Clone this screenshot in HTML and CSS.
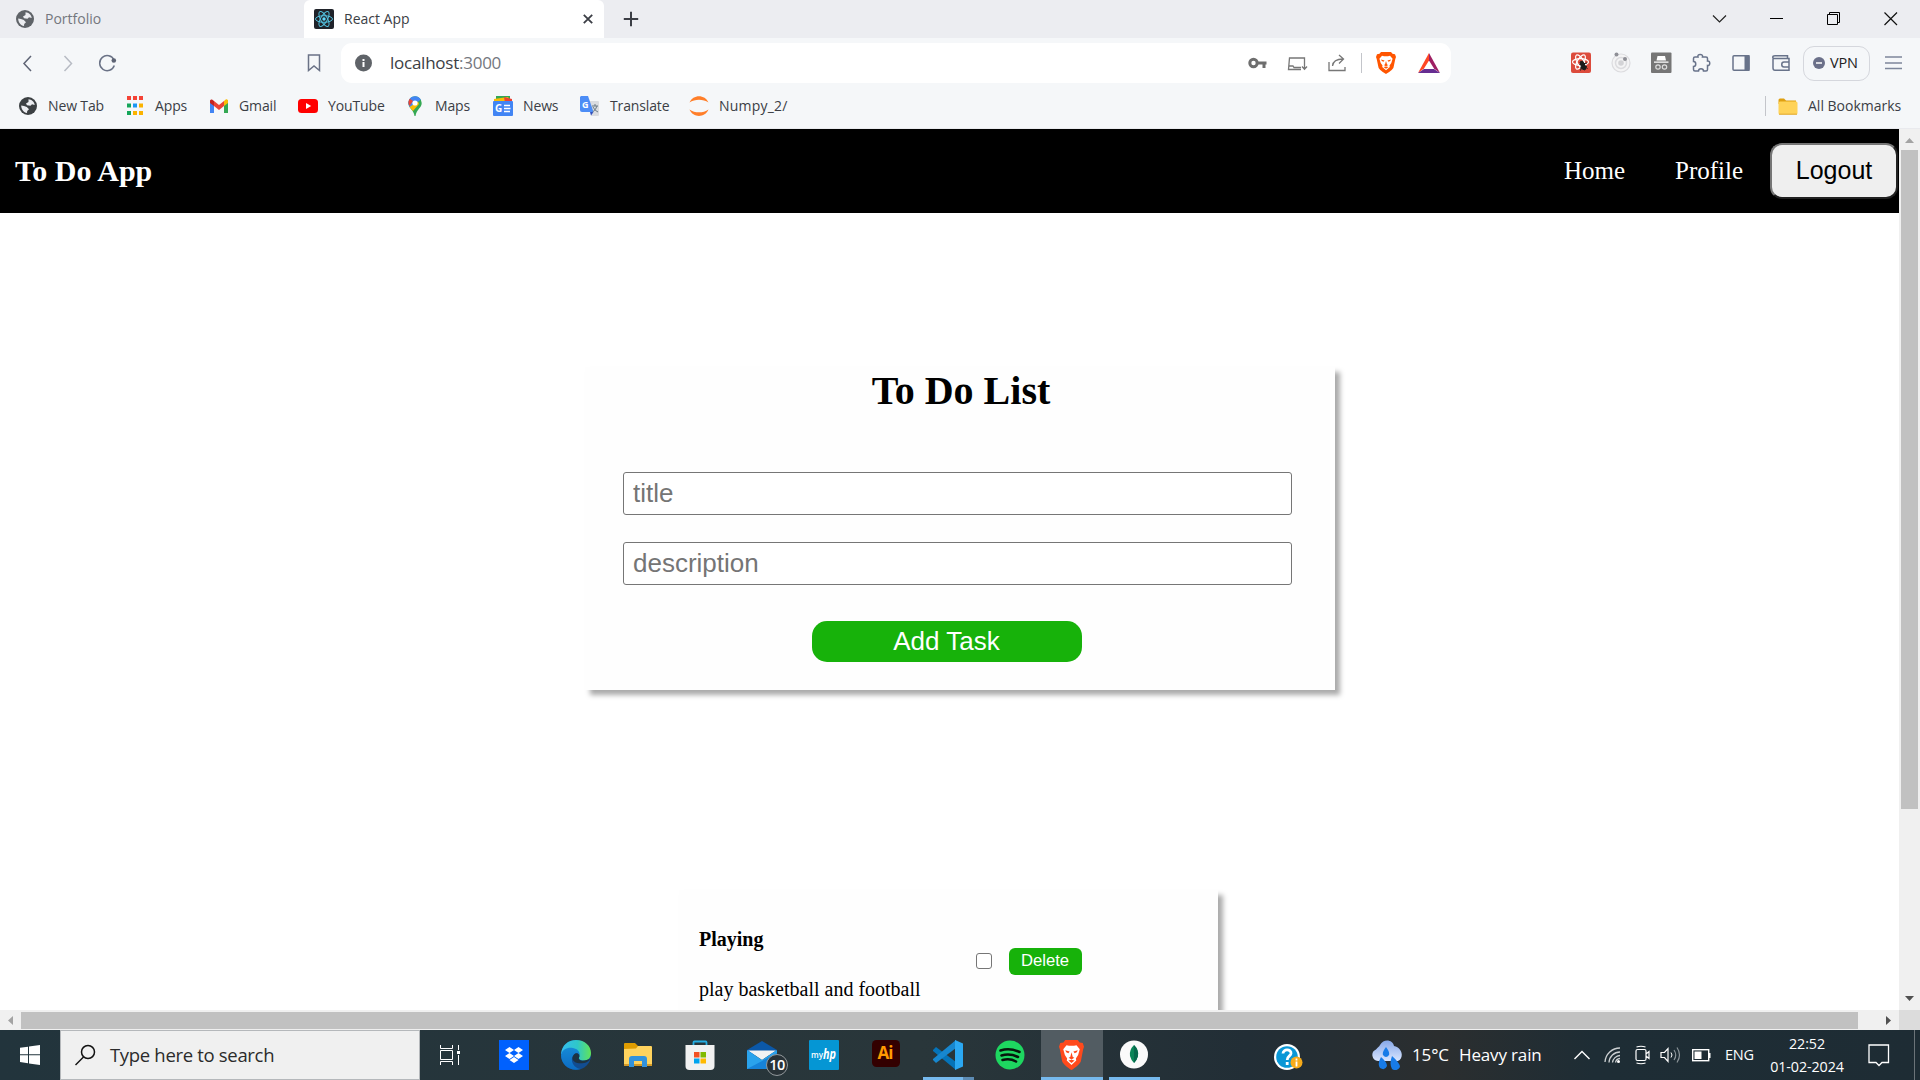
FILE: index.html
```html
<!DOCTYPE html>
<html lang="en">
<head>
<meta charset="utf-8">
<title>React App</title>
<link rel="stylesheet" href="styles.css">
</head>
<body>
<svg class="defs" width="0" height="0">
  <symbol id="globe" viewBox="0 0 18 18"><circle cx="9" cy="9" r="9" fill="currentColor"/><path d="M9.5 2.2C12.500 2.300 15.400 4.700 15.700 8L13 7.300L11.500 8.800L8 8.300L7 6.500L9.500 5ZM2.200 8.500L5 9L7.800 10L10 12.200L8.200 14L8 15.900C4.800 15.500 2.200 12.500 2.200 8.500Z" fill="#ecedf1"/></symbol>
  <symbol id="lion" viewBox="0 0 20 22"><path d="M5 0H15L16.500 1.800L19 2.200L20 5L19.300 7L17.500 15.500C17 17.300 13 20.300 10 22C7 20.300 3 17.300 2.500 15.500L.7 7L0 5L1 2.200L3.500 1.800Z" fill="currentColor"/><path d="M6 3.800L8 4.200H12L14 3.800L16.600 6.800L15.300 11L13.500 13.500L13.800 15L10 18.300L6.200 15L6.500 13.500L4.700 11L3.400 6.800Z" fill="#fff"/><path d="M5 7.500L8.500 8.500L7.500 9.800L5.800 9ZM15 7.500L11.500 8.500L12.500 9.800L14.200 9ZM10 9L11 12.500L12.300 13L10 14.300L7.700 13L9 12.500ZM7.500 15L10 14.500L12.500 15L10 16.800Z" fill="currentColor"/></symbol>
</svg>

<header class="browser">
  <div class="tabs">
    <div class="tab"><svg class="globe faded" width="18" height="18"><use href="#globe"/></svg><span class="muted">Portfolio</span></div>
    <div class="tab active">
      <svg width="20" height="20" viewBox="0 0 20 20"><rect width="20" height="20" rx="2" fill="#20232a"/><g fill="none" stroke="#53c1de" stroke-width="1"><ellipse cx="10" cy="10" rx="8.500" ry="3.300"/><ellipse cx="10" cy="10" rx="8.500" ry="3.300" transform="rotate(60 10 10)"/><ellipse cx="10" cy="10" rx="8.500" ry="3.300" transform="rotate(120 10 10)"/></g><circle cx="10" cy="10" r="1.700" fill="#61dafb"/></svg>
      <span>React App</span>
      <svg class="tab-close" width="10" height="10" viewBox="0 0 10 10"><path d="M.8.8L9.200 9.200M9.200.8L.8 9.200" stroke="#3b3e45" stroke-width="1.800"/></svg>
    </div>
    <svg class="new-tab" width="16" height="16" viewBox="0 0 16 16"><path d="M8 .8V15.200M.8 8H15.200" stroke="#3b3e45" stroke-width="2"/></svg>
    <div class="window-buttons">
      <svg width="57" height="38" viewBox="0 0 57 38"><path d="M22 15.500L28.500 22L35 15.500" fill="none" stroke="#222" stroke-width="1.200"/></svg>
      <svg width="57" height="38" viewBox="0 0 57 38"><path d="M22 18.500H35" stroke="#000"/></svg>
      <svg width="57" height="38" viewBox="0 0 57 38"><path d="M22.500 14.500H32.500V24.500H22.500ZM24.500 14V12.500H34.500V22.500H33" fill="none" stroke="#000"/></svg>
      <svg width="57" height="38" viewBox="0 0 57 38"><path d="M22.500 12.500L35 25M35 12.500L22.500 25" stroke="#111" stroke-width="1.200"/></svg>
    </div>
  </div>

  <div class="toolbar">
    <div class="nav-icons">
      <svg width="40" height="40" viewBox="0 0 40 40"><path d="M23 13L16 20.500L23 28" fill="none" stroke="#5e6475" stroke-width="1.500"/></svg>
      <svg width="40" height="40" viewBox="0 0 40 40"><path d="M16.500 13L23.500 20.500L16.500 28" fill="none" stroke="#b7bbc4" stroke-width="1.500"/></svg>
      <svg width="40" height="40" viewBox="0 0 40 40"><path d="M26 17A7.500 7.500 0 1 0 26.300 22.500" fill="none" stroke="#6a7286" stroke-width="1.500"/><circle cx="25.800" cy="17.500" r="2.300" fill="#5e6475"/></svg>
    </div>
    <svg class="mark" width="14" height="18" viewBox="0 0 14 18"><path d="M1.500 1H12.500V16.500L7 12L1.500 16.500Z" fill="none" stroke="#6a7286" stroke-width="1.500"/></svg>
    <div class="address">
      <svg width="18" height="18" viewBox="0 0 18 18"><circle cx="8.500" cy="9" r="8.500" fill="#5f6368"/><path d="M8.500 8V13M8.500 5V7" stroke="#fff" stroke-width="2"/></svg>
      <span class="url">localhost<span class="port">:3000</span></span>
      <div class="address-icons">
        <svg width="40" height="40" viewBox="0 0 40 40"><circle cx="17.500" cy="20" r="3.700" fill="none" stroke="#6e6e6e" stroke-width="3"/><path d="M21.500 20H30.500M28 20V25" stroke="#6e6e6e" stroke-width="3"/></svg>
        <svg width="40" height="40" viewBox="0 0 40 40"><path d="M25 26.500H12.500L13.500 15H28.500V21M13 23H17L18 24.500H25M28.500 21V26M26 23.500L28.500 26.200L31 23.500" fill="none" stroke="#777" stroke-width="1.300"/></svg>
        <svg width="40" height="40" viewBox="0 0 40 40"><path d="M13 19V27.500H29V24M16.500 23C17 18 20 16 27 16M23 12L27.500 16L23 20.500" fill="none" stroke="#777" stroke-width="1.300"/></svg>
      </div>
      <i class="divider"></i>
      <svg class="shield" width="20" height="22"><use href="#lion"/></svg>
      <svg class="bat" width="22" height="20" viewBox="0 0 22 20"><path d="M11 0L0 20L6 15.500L11 7.500Z" fill="#ff4724"/><path d="M11 0L22 20L16 15.500L11 7.500Z" fill="#9e1f63"/><path d="M0 20H22L16 16H6Z" fill="#662d91"/></svg>
    </div>
    <div class="extensions">
      <svg width="40" height="40" viewBox="0 0 40 40"><rect x="10" y="9.500" width="20" height="20.500" rx="2" fill="#dc4b3c"/><g fill="none" stroke="#fff" stroke-width="1.200"><ellipse cx="19.500" cy="19" rx="8" ry="3.300"/><ellipse cx="19.500" cy="19" rx="8" ry="3.300" transform="rotate(60 19.500 19)"/><ellipse cx="19.500" cy="19" rx="8" ry="3.300" transform="rotate(120 19.500 19)"/></g><path d="M19 19L21.500 18L25 24L24 27L21 26ZM18.500 21.500L26 20M19 25L26 23.500M22 21L19.500 27.500M22 21L26.500 26" fill="#1b1b1b" stroke="#1b1b1b" stroke-width="1"/></svg>
      <svg width="40" height="40" viewBox="0 0 40 40"><circle cx="20" cy="20" r="9" fill="#f4f4f5" stroke="#dcdcdf" stroke-width="1.200"/><circle cx="20" cy="20" r="5.500" fill="none" stroke="#dcdcdf" stroke-width="1.500"/><circle cx="20" cy="20" r="2.800" fill="#d3d3d6"/><circle cx="15.500" cy="11.500" r="2" fill="#8e8f96"/><circle cx="24" cy="16" r="2" fill="#8e8f96"/></svg>
      <svg width="40" height="40" viewBox="0 0 40 40"><rect x="10" y="9.500" width="20.500" height="20.500" rx="1" fill="#767676"/><path d="M16.500 13L24 13L25 17.500H15.500ZM13 18.500H27.500V19.700H13Z" fill="#fff"/><g fill="none" stroke="#ddd" stroke-width="1.200"><circle cx="17" cy="24" r="2.200"/><circle cx="23.500" cy="24" r="2.200"/></g></svg>
      <svg width="40" height="40" viewBox="0 0 40 40"><path d="M12.500 15.500C12.500 14.500 13 14 14 14H17C15.800 10.500 22.500 10.500 21.500 14H25C26 14 26.500 14.500 26.500 15.500V18C29.500 17.500 29.500 23 26.500 22.500V26.500C26.500 27.500 26 28 25 28H22.500C22.500 25 17.500 25 17.500 28H14C13 28 12.500 27.500 12.500 26.500V23.500C15.500 23.500 15.500 18.500 12.500 18.500Z" fill="none" stroke="#68738a" stroke-width="1.500"/></svg>
      <svg width="40" height="40" viewBox="0 0 40 40"><rect x="12" y="12.800" width="16" height="14.500" rx="1" fill="none" stroke="#68738a" stroke-width="1.500"/><path d="M23.500 12H28.500V28H23.500Z" fill="#68738a"/></svg>
      <svg width="40" height="40" viewBox="0 0 40 40"><path d="M26.500 15.500V12.800H14C11 12.800 11 15.500 14 15.500H28V27.300H14C12.500 27.300 12 26.500 12 25V14.500M28 19H23C20 19 20 24 23 24H28" fill="none" stroke="#68738a" stroke-width="1.500"/></svg>
    </div>
    <div class="vpn"><svg width="12" height="12" viewBox="0 0 12 12"><circle cx="6" cy="6" r="6" fill="#6b7089"/><path d="M3 6H9" stroke="#fff" stroke-width="1.500"/></svg><span>VPN</span></div>
    <svg class="menu" width="17" height="14" viewBox="0 0 17 14"><path d="M0 1H17M0 7H17M0 12.500H17" stroke="#7d869b" stroke-width="1.400"/></svg>
  </div>

  <div class="bookmarks">
    <div class="bm bm-new"><svg class="globe" width="20" height="20" viewBox="-1 -1 20 20"><use href="#globe" width="18" height="18"/></svg><span>New Tab</span></div>
    <div class="bm bm-apps"><svg width="20" height="20" viewBox="0 0 20 20"><path d="M2 2H6M8 2H12M14 2H18" stroke="#f44336" stroke-width="4"/><path d="M2 9.500H6" stroke="#14a65a" stroke-width="4"/><path d="M8 9.500H12" stroke="#1b97f3" stroke-width="4"/><path d="M14 9.500H18M8 17H12M14 17H18" stroke="#fbb300" stroke-width="4"/><path d="M2 17H6" stroke="#14a65a" stroke-width="4"/></svg><span>Apps</span></div>
    <div class="bm bm-gmail"><svg width="20" height="20" viewBox="0 0 20 20"><path d="M1 4V17H5V8Z" fill="#4285f4"/><path d="M19 4V17H15V8Z" fill="#34a853"/><path d="M15 5L17 3.300Q19 3 19 5V7L15 10Z" fill="#fbbc04"/><path d="M5 5L10 9L15 5V10L10 14L5 10Z" fill="#ea4335"/><path d="M1 7V5Q1 3 3 3.500L5 5V10Z" fill="#c5221f"/></svg><span>Gmail</span></div>
    <div class="bm bm-yt"><svg width="20" height="20" viewBox="0 0 20 20"><rect y="3" width="20" height="14" rx="3.500" fill="#f00"/><path d="M8 7L13.200 10L8 13Z" fill="#fff"/></svg><span>YouTube</span></div>
    <div class="bm bm-maps"><svg width="20" height="20" viewBox="0 0 20 20"><path d="M3.300 7A6.700 6.700 0 0 1 16.700 7C16.700 12 11.500 13 10.500 20H9.500C9 14 3.300 12 3.300 7Z" fill="#34a853"/><path d="M4.800 2.800A6.700 6.700 0 0 1 15.800 3.500L5.500 12C3 9 2.700 5.500 4.800 2.800Z" fill="#4285f4"/><path d="M4.800 2.800L8 5L4.500 10C3 7.500 3 5 4.800 2.800Z" fill="#ea4335"/><path d="M4.500 11L13 5.500L14 8L8 15Z" fill="#fbbc04"/><circle cx="10" cy="7" r="2.600" fill="#fff"/></svg><span>Maps</span></div>
    <div class="bm bm-news"><svg width="20" height="20" viewBox="0 0 20 20"><path d="M3 0H17V5H3Z" fill="#34a853"/><path d="M1 3L15 1L18 6H1Z" fill="#fbbc04"/><path d="M11 1L19 3V7H12Z" fill="#ea4335"/><rect y="5" width="20" height="15" rx="1" fill="#4285f4"/><path d="M11 9.500H17M11 12.500H17.500M11 15.500H17" stroke="#fff" stroke-width="1.400"/><text class="glyph" x="2" y="16" font-size="10">G</text></svg><span>News</span></div>
    <div class="bm bm-tr"><svg width="20" height="20" viewBox="0 0 20 20"><path d="M8 5H18Q19 5 19 6V19Q19 20 18 20H11Z" fill="#dadce0"/><path d="M1 0H8L13.500 16H2Q0 16 0 14V1Z" fill="#4c8df6"/><path d="M10 16H13.500L11 19.500Z" fill="#3050c0"/><path d="M12 10H18M15 8V10M17 10Q16 14 12.500 16M13 11Q15 15 18 16" fill="none" stroke="#6b7b86"/><text class="glyph" x="2" y="11.500" font-size="9">G</text></svg><span>Translate</span></div>
    <div class="bm bm-np"><svg width="20" height="20" viewBox="0 0 20 20"><path d="M.5 6.500C4-2 16-2 19.500 6.500C14 2.700 6 2.700.5 6.500ZM.5 13.500C4 22 16 22 19.500 13.500C14 17.300 6 17.300.5 13.500Z" fill="#ff7e29"/></svg><span>Numpy_2/</span></div>
    <div class="all"><i class="divider"></i><svg width="20" height="17" viewBox="0 0 20 17"><path d="M.5 2Q.5.500 2 .5H6L8 2.500H18V6H.5Z" fill="#dfa011"/><rect x=".5" y="3.500" width="19" height="13" rx="1.500" fill="#ffd358"/><path d="M1 16.200H19" stroke="#e0a92e"/></svg><span>All Bookmarks</span></div>
  </div>
</header>

<main class="viewport">
  <div class="page">
    <nav class="site-nav">
      <h2>To Do App</h2>
      <div class="links"><a>Home</a><a>Profile</a><button>Logout</button></div>
    </nav>
    <section class="form-card">
      <h1>To Do List</h1>
      <input class="field" placeholder="title">
      <input class="field" placeholder="description">
      <button class="add">Add Task</button>
    </section>
    <section class="task-card">
      <div class="task-text"><h4>Playing</h4><p>play basketball and football</p></div>
      <span class="check"></span>
      <button class="delete">Delete</button>
    </section>
  </div>
  <div class="vbar"><svg width="21" height="21" viewBox="0 0 21 21"><path d="M6 14H15L10.500 9Z" fill="#a3a3a3"/></svg><i></i><svg class="down" width="21" height="21" viewBox="0 0 21 21"><path d="M6 7H15L10.500 12Z" fill="#505050"/></svg></div>
  <div class="hbar"><svg width="21" height="20" viewBox="0 0 21 20"><path d="M13 6V15L8 10.500Z" fill="#a3a3a3"/></svg><i></i><svg class="right" width="21" height="20" viewBox="0 0 21 20"><path d="M8 6V15L13 10.500Z" fill="#505050"/></svg></div>
  <div class="corner"></div>
</main>

<footer class="taskbar">
  <div class="start"><svg width="20" height="20" viewBox="0 0 20 20"><path d="M0 2.800L8 1.700V9.300H0ZM9 1.500L20 0V9.300H9ZM0 10.300H8V18.200L0 17.100ZM9 10.300H20V20L9 18.400Z" fill="#fff"/></svg></div>
  <div class="search"><svg width="22" height="22" viewBox="0 0 22 22"><circle cx="13" cy="8" r="6.500" fill="none" stroke="#111" stroke-width="1.500"/><path d="M8.500 13L.5 21" stroke="#111" stroke-width="1.500"/></svg><span>Type here to search</span></div>
  <div class="task-view"><svg width="20" height="20" viewBox="0 0 20 20"><path d="M.5 0V3.500H12.500V0M.5 5.500H12.500V14.500H.5ZM.5 20V16.500H12.500V20M18.500 0V5M18.500 10V20" fill="none" stroke="#fff"/><rect x="17" y="6" width="3" height="3" fill="#fff"/></svg></div>
  <div class="apps">
    <div class="app"><svg width="30" height="30" viewBox="0 0 30 30"><rect width="30" height="30" fill="#0061fe"/><path d="M10.500 7L15 10L10.500 13L6 10ZM19.500 7L24 10L19.500 13L15 10ZM10.500 13L15 16L10.500 19L6 16ZM19.500 13L24 16L19.500 19L15 16ZM15 17L19.500 20L15 23L10.500 20Z" fill="#fff"/></svg></div>
    <div class="app"><svg width="30" height="30" viewBox="0 0 30 30"><defs><linearGradient id="eg" x1="0" x2="1"><stop offset="0" stop-color="#35bdf0"/><stop offset=".55" stop-color="#2fc7c8"/><stop offset="1" stop-color="#62e457"/></linearGradient><linearGradient id="eb" x1="0" y1="0" x2="0" y2="1"><stop offset="0" stop-color="#1689d5"/><stop offset="1" stop-color="#0c6cc4"/></linearGradient></defs><circle cx="15" cy="15" r="15" fill="#124d91"/><path d="M0 14C1 5 7 0 15 0C24 0 30 6 30 13C30 18 27 20.500 23 20.500C19 20.500 17.500 19 18 17.500C20 15 17 11 13 11Z" fill="url(#eg)"/><path d="M0 15C1 9 7 7 12 8C17 9 19 12 18.500 15C16 12 12 14 11 18C10 24 15 29 20 29C9 32 0 25 0 15Z" fill="url(#eb)"/><path d="M11.500 19C11.500 13 17 12 18 15C19 17 17 18 18 19.500C21 22 26 20 29 19C28 21 26 22.500 23 23C17 24 12.500 22.500 11.500 19Z" fill="#1d3342"/></svg></div>
    <div class="app"><svg width="28" height="24" viewBox="0 0 28 24"><path d="M0 1Q0 0 1 0H11L14 3V6H0Z" fill="#df9c00"/><path d="M0 6L12 5.500L14 3H27Q28 3 28 4V22Q28 23 27 23H0Z" fill="#ffd35e"/><path d="M0 21H28V23H0Z" fill="#d59a27"/><path d="M5 24V16Q5 13 8 13H20Q23 13 23 16V24H18V18H10V24Z" fill="#3292dc"/></svg></div>
    <div class="app"><svg width="30" height="30" viewBox="0 0 30 30"><path d="M8.500 6V2.500Q8.500 1.500 9.500 1.500H20.500Q21.500 1.500 21.500 2.500V6" fill="none" stroke="#25aee3" stroke-width="1.800"/><path d="M.5 5H29.500V26Q29.500 30 25.500 30H4.500Q.5 30 .5 26Z" fill="#f1f1f1"/><path d="M9 12H14.500V17.500H9Z" fill="#f25022"/><path d="M15.500 12H21V17.500H15.500Z" fill="#7fba00"/><path d="M9 18.500H14.500V23.500H9Z" fill="#00a4ef"/><path d="M15.500 18.500H21V23.500H15.500Z" fill="#ffb900"/></svg></div>
    <div class="app mail"><svg width="30" height="28" viewBox="0 0 30 28"><path d="M0 9L15 0L30 9V14H0Z" fill="#0b58a8"/><path d="M1 9.500H29L15 19Z" fill="#f3f3f3"/><path d="M0 9L15 19L30 9V28H0Z" fill="#2aa3ec"/><path d="M0 28L30 12V28Z" fill="#1683d8"/></svg><b class="badge">10</b></div>
    <div class="app"><svg width="30" height="30" viewBox="0 0 30 30"><rect width="30" height="30" rx="1" fill="#0596d4"/><text class="glyph my" x="2" y="18" font-size="9.500" textLength="12" lengthAdjust="spacingAndGlyphs">my</text><text class="glyph hp" x="14" y="19" font-size="14" textLength="13" lengthAdjust="spacingAndGlyphs">hp</text></svg></div>
    <div class="app"><svg class="ai" width="28" height="27" viewBox="0 0 28 27"><rect width="28" height="27" rx="4.500" fill="#330000"/><text class="glyph orange" x="5.500" y="19" font-size="17" textLength="16">Ai</text></svg></div>
    <div class="app vs"><svg width="30" height="30" viewBox="0 0 30 30"><path d="M0 10L3 7L23 22V30L0 11Z" fill="#0573b8"/><path d="M0 20L3 23L23 8V0L0 19Z" fill="#1787cf"/><path d="M22 0L30 3.500V26.500L22 30Z" fill="#2ba8f2"/></svg></div>
    <div class="app"><svg width="30" height="30" viewBox="0 0 30 30"><circle cx="15" cy="15" r="14.500" fill="#1ed760"/><path d="M5.500 10.500Q15 7.500 24.500 12M6.500 15.500Q15 13 23 17M7.500 20Q15 18 21 21.500" fill="none" stroke="#07170d" stroke-width="2.600" stroke-linecap="round"/></svg></div>
    <div class="app current"><svg class="brave" width="25" height="30" viewBox="0 0 20 22" preserveAspectRatio="none"><use href="#lion" width="20" height="22"/></svg></div>
    <div class="app open"><svg width="30" height="30" viewBox="0 0 30 30"><circle cx="15" cy="14.500" r="14" fill="#fafafa"/><path d="M15 5Q20 10 19 16Q18 20 15 23Q12 20 11 16Q10 10 15 5Z" fill="#0b8558"/><path d="M15 5Q20 10 19 16Q18 20 15 23Z" fill="#07694c"/></svg></div>
  </div>
  <svg class="help" width="30" height="30" viewBox="0 0 30 30"><circle cx="14" cy="14" r="13" fill="#fff"/><circle cx="14" cy="14" r="10.800" fill="#0a97d6"/><path d="M10 10.500C10 5.500 18.500 6 18 10.500C17.500 13.500 14.200 13 14.200 17M14.200 19V22" fill="none" stroke="#fff" stroke-width="2.800"/><circle cx="23.500" cy="19.500" r="6" fill="#f7ab1a"/><path d="M23.500 18.500V23.500M23.500 15.500V17.500" stroke="#fff" stroke-width="1.800"/></svg>
  <div class="weather"><svg width="30" height="30" viewBox="0 0 30 30"><defs><linearGradient id="cl" x1="0" y1="0" x2="0" y2="1"><stop offset="0" stop-color="#87a8e8"/><stop offset="1" stop-color="#d8e5ff"/></linearGradient></defs><path d="M6 21A6 6 0 0 1 4 9.500C6 7 7 7 8 5C12-2 21 0 22 6C31 8 32 18 26 21Z" fill="url(#cl)"/><path d="M14 7Q18 12 17 15Q14 19 11 15Q10 12 14 7ZM9 17Q15 22 15 26Q13 31 8 28Q5 24 9 17ZM20 16Q28 23 28 27Q25 32 20 29Q17 24 20 16Z" fill="#177be8"/></svg><span class="temp">15°C</span><span>Heavy rain</span></div>
  <div class="tray">
    <svg width="30" height="30" viewBox="0 0 30 30"><path d="M7.500 19L15 11.500L22.500 19" fill="none" stroke="#fff" stroke-width="1.400"/></svg>
    <svg width="30" height="30" viewBox="0 0 30 30"><g fill="none" stroke="#ccd0d2" stroke-width="1.300"><path d="M8 22A15 15 0 0 1 23 8M12 22.500A11 11 0 0 1 23 12M15.500 22.500A8 8 0 0 1 23 15.500"/><path d="M18.500 22.500A5 5 0 0 1 23 18.500"/></g><circle cx="21.500" cy="21.500" r="1.500" fill="#fff"/></svg>
    <svg width="30" height="30" viewBox="0 0 30 30"><path d="M9 11Q9 9.500 10.500 9.500H17.500Q19 9.500 19 11V19Q19 20.500 17.500 20.500H10.500Q9 20.500 9 19ZM19 14L22 11.500V18.500L19 16M9.500 7Q14 5.500 18.500 7M9.500 23Q14 24.500 18.500 23" fill="none" stroke="#fff" stroke-width="1.200"/></svg>
    <svg width="30" height="30" viewBox="0 0 30 30"><path d="M4 12.500H7.500L11 8.500V21.500L7.500 17.500H4Z" fill="none" stroke="#fff" stroke-width="1.200"/><path d="M14 12.500Q16 15 14 17.500" fill="none" stroke="#fff"/><path d="M17 10Q20.500 15 17 20M20 7.500Q25 15 20 22.500" fill="none" stroke="#8b9499" stroke-width="1.200"/></svg>
    <svg width="30" height="30" viewBox="0 0 30 30"><rect x="5.700" y="9.700" width="16" height="11" fill="none" stroke="#fff" stroke-width="1.400"/><path d="M7.500 11.500H14.500V19H7.500ZM22 13H23.500V18H22Z" fill="#fff"/></svg>
  </div>
  <span class="lang">ENG</span>
  <div class="clock"><span class="time">22:52</span><span class="date">01-02-2024</span></div>
  <svg class="notice" width="22" height="23" viewBox="0 0 22 23"><path d="M1 1H20.500V18.500H14L11 21.500L8 18.500H1Z" fill="none" stroke="#fff" stroke-width="1.300"/></svg>
  <i class="peek"></i>
</footer>
</body>
</html>
```
FILE: styles.css
```css
* { box-sizing: border-box; }
body { margin: 0; width: 1920px; height: 1080px; overflow: hidden; display: flex; flex-direction: column; background: #fff; font-family: "Open Sans", "Noto Sans", sans-serif; }
svg { display: block; flex: none; }
span { white-space: nowrap; }
.defs { position: absolute; }

.browser { height: 129px; background: #f5f7f9; font-size: 14px; color: #3b3e45; flex: none; border-bottom: 1px solid #e9eaee; }
.browser span { padding-bottom: 2px; }
.tabs { height: 38px; display: flex; align-items: center; background: #ecedf1; }
.tab { width: 304px; height: 38px; display: flex; align-items: center; padding-left: 16px; gap: 11px; }
.tab.active { width: 300px; padding: 0 11px 0 10px; gap: 10px; background: #fff; border-radius: 6px 6px 0 0; }
.globe { color: #3c4043; }
.faded { color: #5f6368; }
.muted { color: #74777e; }
.tab-close { margin-left: auto; }
.new-tab { margin-left: 19px; }
.window-buttons { margin: 0 1px 0 auto; display: flex; }

.toolbar { height: 50px; display: flex; align-items: center; }
.nav-icons { display: flex; padding-left: 8px; width: 307px; }
.address { width: 1110px; height: 40px; margin-left: 20px; padding-left: 14px; border-radius: 11px; background: #fff; display: flex; align-items: center; }
.url { margin-left: 17px; font-size: 17px; width: 846px; letter-spacing: -.25px; }
.port { color: #74777e; }
.address-icons { display: flex; }
.divider { display: block; width: 1px; height: 20px; background: #c3c5ca; }
.address-icons + .divider { margin-left: 5px; }
.shield { margin-left: 14px; color: #ff5500; }
.bat { margin-left: 22px; }
.extensions { display: flex; margin-left: 110px; }
.vpn { width: 67px; height: 35px; margin-left: 2px; border: 1px solid #d5d7dd; border-radius: 11px; display: flex; align-items: center; padding-left: 9px; gap: 5px; color: #222; font-size: 14.5px; letter-spacing: -.2px; }
.menu { margin-left: 15px; }

.bookmarks { display: flex; height: 36px; align-items: center; padding: 0 18px; }
.bm { display: flex; align-items: center; gap: 10px; flex: none; letter-spacing: -.13px; }
.bm-new { width: 107px; }
.bm-apps { width: 84px; }
.bm-gmail { width: 89px; }
.bm-yt { width: 107px; }
.bm-maps { width: 88px; }
.bm-news { width: 87px; }
.bm-tr { width: 109px; }
.bm-np { letter-spacing: .2px; }
.all { margin-left: auto; display: flex; align-items: center; width: 137px; letter-spacing: 0; }
.all svg { margin: 0 10px 0 12px; }
.glyph { font-family: "Open Sans", sans-serif; font-weight: 700; fill: #fff; }
.my { font-weight: 600; }
.hp { font-style: italic; }
.orange { fill: #ff9a00; }

.viewport { height: 901px; flex: none; display: grid; grid-template: 881px 20px / 1899px 21px; }
.page { overflow: hidden; font-family: "Liberation Serif", serif; color: #000; }
.site-nav { height: 84px; padding: 0 1px 0 15px; background: #000; color: #fff; display: flex; align-items: center; justify-content: space-between; }
.site-nav h2 { margin: 0; font-size: 30px; }
.links { display: flex; align-items: center; font-size: 25px; }
.links a:first-child { width: 111px; }
.links a { width: 95px; }
.links button { width: 128px; height: 56px; border: 2px outset #767676; border-radius: 12px; background: #efefef; font: 25px "Liberation Sans", sans-serif; color: #000; padding: 0 0 1px; }
.form-card { width: 750px; height: 323px; margin: 154px 0 0 585px; padding: 0 36px 0 38px; background: #fefefe; box-shadow: 5px 5px 5px #aaa; }
.form-card h1 { margin: 0 0 58px; padding-top: 1px; font-size: 40px; line-height: 46px; text-align: center; }
.field { display: block; width: 669px; height: 43px; margin-bottom: 27px; border: 1px solid #767676; border-radius: 3px; padding: 0 9px; background: #fff; font: 26px "Liberation Sans", sans-serif; }
.field::placeholder { color: #757575; }
.add { display: block; width: 270px; height: 41px; margin: 36px 0 0 189px; border: 0; border-radius: 15px; background: #17b20a; color: #fff; font: 26px "Liberation Sans", sans-serif; padding: 0 1px 0 0; }
.task-card { width: 539px; height: 200px; margin: 200px 0 0 679px; padding: 38px 0 0 20px; background: #fefefe; box-shadow: 5px 5px 5px #aaa; display: flex; align-items: flex-start; font-size: 20px; line-height: 23px; }
.task-text { width: 277px; }
.task-text h4, .task-text p { margin: 0; }
.task-text p { margin-top: 27px; }
.check { width: 16px; height: 16px; margin-top: 25px; border: 1px solid #767676; border-radius: 3px; background: #fff; }
.delete { width: 73px; height: 27px; margin: 20px 0 0 17px; border: 0; border-radius: 6px; background: #17b20a; color: #fff; padding: 0 1px 2px 0; font: 16.67px "Liberation Sans", sans-serif; }
.vbar { background: #f0f0f0; display: flex; flex-direction: column; align-items: center; }
.vbar i { width: 17px; height: 659px; background: #c1c1c1; }
.down { margin-top: auto; }
.hbar { background: #f0f0f0; display: flex; align-items: center; }
.hbar i { width: 1837px; height: 17px; background: #c1c1c1; }
.right { margin-left: auto; }
.corner { background: #dcdcdc; }

.taskbar { height: 50px; display: flex; align-items: center; color: #fff; background: linear-gradient(90deg, #22343c 0, #29363a 48%, #222e36 65%, #2b2e2f 75%, #1e2d35 83%, #1e2c34 100%); }
.start { width: 60px; display: flex; justify-content: center; }
.search { width: 360px; height: 50px; display: flex; align-items: center; gap: 13px; padding-left: 14px; background: #f0f0f0; border: 1px solid #b5b8bb; color: #2b2b2b; font-size: 18.5px; letter-spacing: -.32px; }
.search span { padding-bottom: 1px; }
.task-view { width: 63px; padding-left: 20px; }
.apps { display: flex; height: 50px; }
.app { width: 62px; display: flex; align-items: center; justify-content: center; position: relative; }
.badge { position: absolute; left: 35px; top: 24px; width: 22px; height: 22px; border: 1px solid #93999c; border-radius: 50%; background: #283237; font-size: 14.5px; line-height: 19px; letter-spacing: -.5px; text-align: center; font-weight: 600; }
.ai { margin-bottom: 3px; }
.vs { background: linear-gradient(#76b9ed, #76b9ed) 6px bottom / 40px 3px no-repeat, linear-gradient(#5d8cb4, #5d8cb4) 46px bottom / 11px 3px no-repeat; }
.current { background: #525c62; border-bottom: 3px solid #76b9ed; }
.brave { color: #ff4a1c; margin: 2px 1px 0 0; }
.open { background: linear-gradient(#76b9ed, #76b9ed) center bottom / 51px 3px no-repeat; }
.help { margin: 5px 0 0 108px; }
.weather { display: flex; align-items: center; margin-left: 69px; width: 195px; font-size: 17px; letter-spacing: -.15px; }
.weather span { padding-bottom: 1px; }
.temp { width: 47px; margin-left: 10px; }
.tray { display: flex; width: 158px; }
.lang { width: 38px; font-size: 14.5px; padding-bottom: 1px; letter-spacing: -.2px; }
.clock { width: 88px; font-size: 14.3px; display: flex; flex-direction: column; align-items: center; line-height: 23px; letter-spacing: -.1px; }
.notice { margin-left: 17px; }
.peek { width: 1px; height: 50px; background: #6b7378; margin-left: 24px; }
```
